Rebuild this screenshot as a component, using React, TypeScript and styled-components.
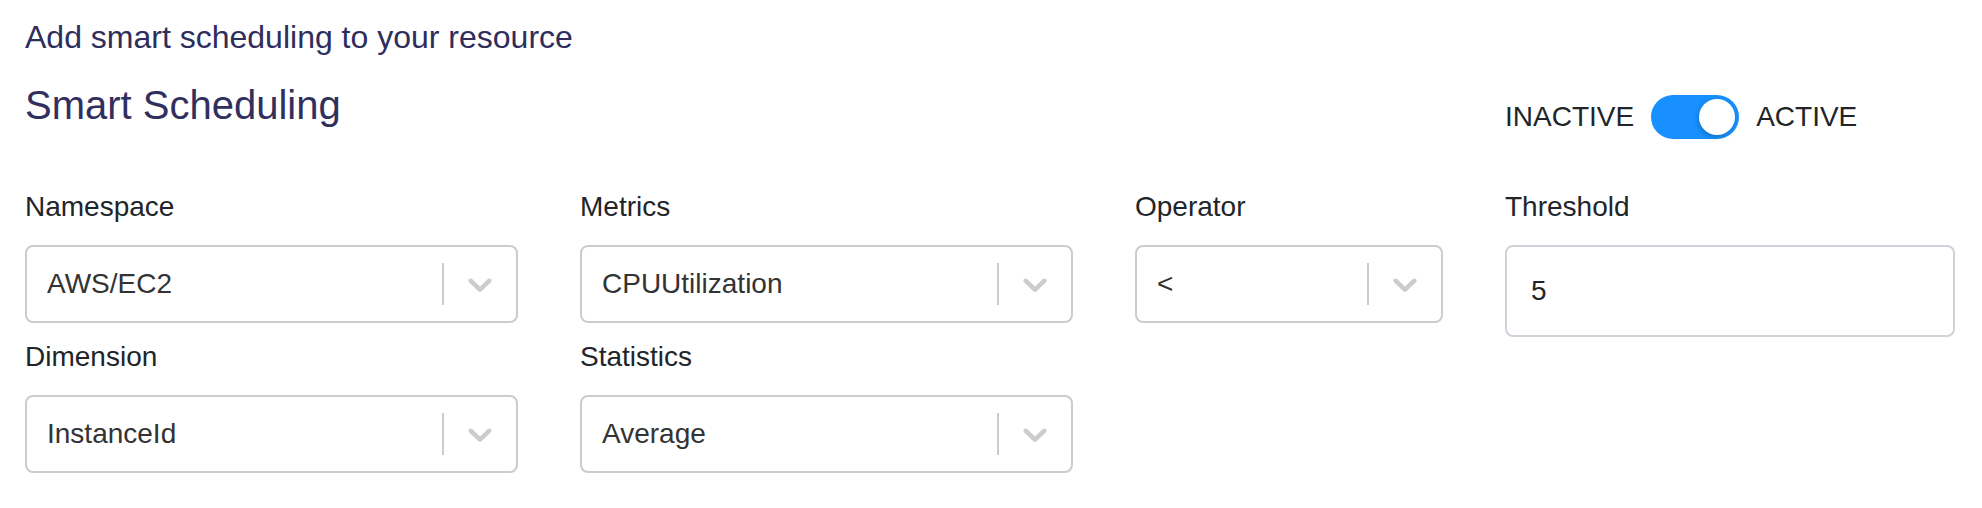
import styled, { createGlobalStyle } from 'styled-components'

import { FC } from 'react'

const GlobalStyle = createGlobalStyle`
  html, body {
    margin: 0;
    padding: 0;
    background: #ffffff;
  }
  body {
    font-family: "Liberation Sans", Arial, Helvetica, sans-serif;
    color: #212529;
  }
  * {
    box-sizing: border-box;
  }
`

const StyledPage = styled.div`
  padding: 13px 25px 0 25px;
  width: 1982px;
`

const StyledSubtitle = styled.div`
  font-size: 32px;
  line-height: 48px;
  color: #2e2d5c;
`

const StyledGrid = styled.div`
  display: grid;
  grid-template-columns: 493px 493px 308px 450px;
  column-gap: 62px;
`

const StyledHeader = styled(StyledGrid)`
  margin-top: 20px;
  align-items: start;
`

const StyledTitle = styled.h2`
  grid-column: 1 / 4;
  margin: 0;
  font-size: 40px;
  line-height: 48px;
  font-weight: 400;
  color: #302f5e;
`

const StyledToggleGroup = styled.div`
  grid-column: 4;
  display: flex;
  align-items: center;
  gap: 17px;
  margin-top: 14px;
  font-size: 28px;
  color: #212529;
`

const StyledSwitch = styled.div<{ $on: boolean }>`
  width: 88px;
  height: 44px;
  border-radius: 22px;
  background: ${p => (p.$on ? '#1890ff' : '#bfbfbf')};
  display: flex;
  align-items: center;
  justify-content: ${p => (p.$on ? 'flex-end' : 'flex-start')};
  padding: 0 4px;
`

const StyledKnob = styled.div`
  width: 36px;
  height: 36px;
  border-radius: 50%;
  background: #ffffff;
  box-shadow: -1px 2px 5px rgba(0, 35, 11, 0.25);
`

const StyledFields = styled(StyledGrid)`
  margin-top: 47px;
  row-gap: 13px;
  align-items: start;
`

const StyledField = styled.div<{ $col: number; $row: string }>`
  grid-column: ${p => p.$col};
  grid-row: ${p => p.$row};
  display: flex;
  flex-direction: column;
`

const StyledLabel = styled.label`
  font-size: 28px;
  line-height: 42px;
  color: #212529;
  margin-bottom: 17px;
`

const StyledSelect = styled.div`
  height: 78px;
  border: 2px solid #cccccc;
  border-radius: 8px;
  background: #ffffff;
  display: flex;
  align-items: center;
`

const StyledValue = styled.div`
  flex: 1;
  padding: 0 20px 0 20px;
  font-size: 28px;
  color: #333333;
`

const StyledSeparator = styled.span`
  align-self: stretch;
  width: 2px;
  margin: 16px 0;
  background: #cccccc;
`

const StyledIndicator = styled.div`
  padding: 16px;
  display: flex;
  color: #cccccc;
`

const StyledInput = styled.div`
  height: 92px;
  border: 2px solid #ced4da;
  border-radius: 8px;
  padding: 0 24px;
  display: flex;
  align-items: center;
  font-size: 28px;
  color: #212529;
`

const Chevron: FC = () => (
  <svg width="40" height="40" viewBox="0 0 20 20" fill="currentColor" aria-hidden="true">
    <path d="M4.516 7.548c0.436-0.446 1.043-0.481 1.576 0l3.908 3.747 3.908-3.747c0.533-0.481 1.141-0.446 1.574 0 0.436 0.445 0.408 1.197 0 1.615-0.406 0.418-4.695 4.502-4.695 4.502-0.217 0.223-0.502 0.335-0.787 0.335s-0.57-0.112-0.789-0.335c0 0-4.287-4.084-4.695-4.502s-0.436-1.17 0-1.615z" />
  </svg>
)

const Select: FC<{ value: string }> = ({ value }) => (
  <StyledSelect>
    <StyledValue>{value}</StyledValue>
    <StyledSeparator />
    <StyledIndicator>
      <Chevron />
    </StyledIndicator>
  </StyledSelect>
)

const selects = [
  { label: 'Namespace', value: 'AWS/EC2', col: 1, row: '1' },
  { label: 'Metrics', value: 'CPUUtilization', col: 2, row: '1' },
  { label: 'Operator', value: '<', col: 3, row: '1' },
  { label: 'Dimension', value: 'InstanceId', col: 1, row: '2' },
  { label: 'Statistics', value: 'Average', col: 2, row: '2' },
]

const App: FC = () => {
  return (
    <StyledPage>
      <GlobalStyle />
      <StyledSubtitle>Add smart scheduling to your resource</StyledSubtitle>
      <StyledHeader>
        <StyledTitle>Smart Scheduling</StyledTitle>
        <StyledToggleGroup>
          <span>INACTIVE</span>
          <StyledSwitch $on>
            <StyledKnob />
          </StyledSwitch>
          <span>ACTIVE</span>
        </StyledToggleGroup>
      </StyledHeader>
      <StyledFields>
        {selects.map(s => (
          <StyledField key={s.label} $col={s.col} $row={s.row}>
            <StyledLabel>{s.label}</StyledLabel>
            <Select value={s.value} />
          </StyledField>
        ))}
        <StyledField $col={4} $row="1 / 3">
          <StyledLabel>Threshold</StyledLabel>
          <StyledInput>5</StyledInput>
        </StyledField>
      </StyledFields>
    </StyledPage>
  )
}

export default App
